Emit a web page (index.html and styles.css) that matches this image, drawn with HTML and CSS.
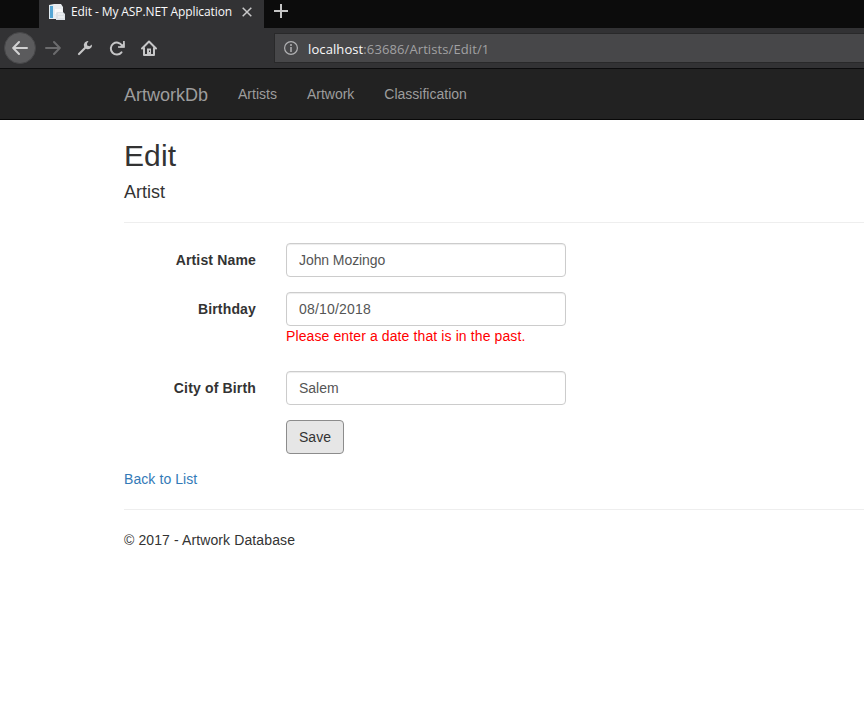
FILE: index.html
```html
<!DOCTYPE html>
<html lang="en">
<head>
<meta charset="utf-8">
<title>Edit - My ASP.NET Application</title>
<link rel="stylesheet" href="styles.css">
</head>
<body>
<div class="tabs">
  <div class="tab">
    <svg class="favicon" width="16" height="16" viewBox="0 0 16 16"><path d="M0 1l5-1v15H0z" fill="#e3edf3"/><path d="M1 2h3v12H1z" fill="#54a6d4"/><path d="M5 0h7l2 3v12H5z" fill="#e9edf0"/><path d="M6 5h6l2 2v3H6z" fill="#fafafa"/><path d="M8 8h6l2 2v6H7V9z" fill="#dde2e6"/><path d="M9 10h5M9 13h6" stroke="#f8f8f8"/></svg>
    <span class="tab-title">Edit - My ASP.NET Application</span>
    <svg class="close" width="10" height="10" viewBox="0 0 10 10"><path d="M.7.7l8.600 8.600M9.300.7L.7 9.300" stroke="#c8c8c9" stroke-width="1.500"/></svg>
  </div>
  <svg class="plus" width="14" height="14" viewBox="0 0 14 14"><path d="M7 0v14M0 7h14" stroke="#c5c5c5" stroke-width="2"/></svg>
</div>
<div class="toolbar">
  <div class="back"><svg width="16" height="16" viewBox="0 0 16 16"><path d="M15 8H1.500M7 2L1.200 8 7 14" fill="none" stroke="#d1d1d2" stroke-width="2" stroke-linecap="round" stroke-linejoin="round"/></svg></div>
  <svg class="forward" width="16" height="16" viewBox="0 0 16 16"><path d="M1 8h13.500M9 2l5.800 6L9 14" fill="none" stroke="#6b6b6d" stroke-width="2" stroke-linecap="round" stroke-linejoin="round"/></svg>
  <svg class="tool" width="16" height="16" viewBox="0 0 16 16"><path d="M2 14L9 7" stroke="#c6c6c7" stroke-width="2.200" stroke-linecap="round"/><path d="M11.500 1A4.200 4.200 0 0 0 7 6.500L9.500 9A4.200 4.200 0 0 0 15 4.500L12.500 6.200 10.200 5.500 10 3.500z" fill="#c6c6c7"/></svg>
  <svg class="tool" width="16" height="16" viewBox="0 0 16 16"><path d="M12.500 12.300A6 6 0 1 1 13 5.500" fill="none" stroke="#c6c6c7" stroke-width="2" stroke-linecap="round"/><path d="M14.900 1v6H9" fill="none" stroke="#c6c6c7" stroke-width="1.700"/><path d="M15.500 2.500V7.500H10z" fill="#c6c6c7"/></svg>
  <svg class="tool" width="16" height="16" viewBox="0 0 16 16"><path d="M1 8.500l7-7 7 7M3 7.500V15h10V7.500" fill="none" stroke="#c6c6c7" stroke-width="2" stroke-linecap="round" stroke-linejoin="round"/><path d="M6 8.500h4V15H6z" fill="#c6c6c7"/><path d="M8 10.500h1v1.500H8z" fill="#323234"/></svg>
  <div class="address">
    <svg width="14" height="14" viewBox="0 0 14 14"><circle cx="7" cy="7" r="6.400" fill="none" stroke="#b1b1b3" stroke-width="1.200"/><path d="M7 6v5M7 3v2" stroke="#b1b1b3" stroke-width="1.500"/></svg>
    <span class="url"><span class="host">localhost</span><span class="path">:63686/Artists/Edit/1</span></span>
  </div>
</div>
<nav class="navbar">
  <a class="brand">ArtworkDb</a>
  <a>Artists</a><a>Artwork</a><a>Classification</a>
</nav>
<main class="container">
  <h2>Edit</h2>
  <h4>Artist</h4>
  <hr>
  <form class="form">
    <div class="group"><label for="name">Artist Name</label><input id="name" type="text" value="John Mozingo"></div>
    <div class="group dated"><label for="birthday">Birthday</label><div class="field"><input class="date" id="birthday" type="text" value="08/10/2018"><span class="error">Please enter a date that is in the past.</span></div></div>
    <div class="group"><label for="city">City of Birth</label><input id="city" type="text" value="Salem"></div>
    <div class="group"><span class="spacer"></span><button type="button">Save</button></div>
  </form>
  <a class="list-link">Back to List</a>
  <hr class="footer-rule">
  <footer>© 2017 - Artwork Database</footer>
</main>
</body>
</html>
```
FILE: styles.css
```css
* { box-sizing: border-box; }
body {
  margin: 0;
  background: #fff;
  color: #333;
  font: 14px/20px "Liberation Sans", Arial, sans-serif;
  overflow: hidden;
}
svg { display: block; flex: none; }
.tabs {
  display: flex;
  height: 28px;
  background: #0c0c0c;
}
.tab {
  display: flex;
  align-items: center;
  width: 225px;
  height: 28px;
  margin-left: 39px;
  padding: 0 0 4px 10px;
  background: #323234;
}
.tab-title {
  width: 161px;
  margin-left: 6px;
  color: #f9f9fa;
  font: 12px/16px "Open Sans", "Noto Sans", sans-serif;
  letter-spacing: -0.1px;
  white-space: nowrap;
}
.close { margin-left: 10px; }
.plus { margin: 4px 0 0 10px; }
.toolbar {
  display: flex;
  align-items: center;
  height: 41px;
  padding-left: 4px;
  background: #323234;
  border-bottom: 1px solid #0c0c0d;
}
.back {
  display: flex;
  align-items: center;
  justify-content: center;
  width: 32px;
  height: 32px;
  border: 1px solid #474749;
  border-radius: 50%;
  background: #5b5b5d;
}
.forward { margin-left: 9px; }
.tool { margin-left: 16px; }
.address {
  display: flex;
  align-items: center;
  flex: 1;
  height: 30px;
  margin-left: 117px;
  padding-left: 9px;
  background: #474749;
  border: 1px solid #29292a;
  border-right: 0;
}
.url {
  margin-left: 10px;
  padding-top: 2px;
  font: 13px/18px "Open Sans", "Noto Sans", sans-serif;
  letter-spacing: 0.1px;
  white-space: nowrap;
}
.host { color: #f9f9fa; }
.path { color: #a1a1a3; }
.navbar {
  display: flex;
  align-items: center;
  gap: 30px;
  height: 51px;
  padding-left: 124px;
  background: #222;
  border-bottom: 1px solid #080808;
  color: #9d9d9d;
}
.brand { padding-top: 2px; font-size: 18px; }
.container { padding: 19px 0 0 124px; }
h2, h4 { margin: 0; font-weight: 400; }
h2 { font-size: 30px; line-height: 33px; letter-spacing: 0.1px; }
h4 { margin-top: 10px; font-size: 18px; line-height: 20px; }
hr { height: 1px; margin: 20px 0; border: 0; background: #eee; }
.group {
  display: flex;
  align-items: flex-start;
  height: 34px;
  margin-bottom: 15px;
}
.dated { height: 64px; }
label, .spacer { width: 132px; margin-right: 30px; }
label {
  padding-top: 7px;
  font-weight: 700;
  letter-spacing: 0.16px;
  text-align: right;
}
input {
  display: block;
  width: 280px;
  height: 34px;
  padding: 6px 12px;
  border: 1px solid #ccc;
  border-radius: 4px;
  background: #fff;
  box-shadow: inset 0 1px 1px rgba(0, 0, 0, .075);
  color: #555;
  font: inherit;
}
input[id="name"] { letter-spacing: -0.08px; }
.date { letter-spacing: 0.2px; }
.error { display: block; color: #f00; letter-spacing: 0.11px; }
button {
  width: 58px;
  height: 34px;
  padding: 0;
  border: 1px solid #8c8c8c;
  border-radius: 4px;
  background: #e6e6e6;
  color: #333;
  font: inherit;
}
.list-link { display: block; color: #337ab7; letter-spacing: 0.08px; }
footer { letter-spacing: 0.11px; }
```
